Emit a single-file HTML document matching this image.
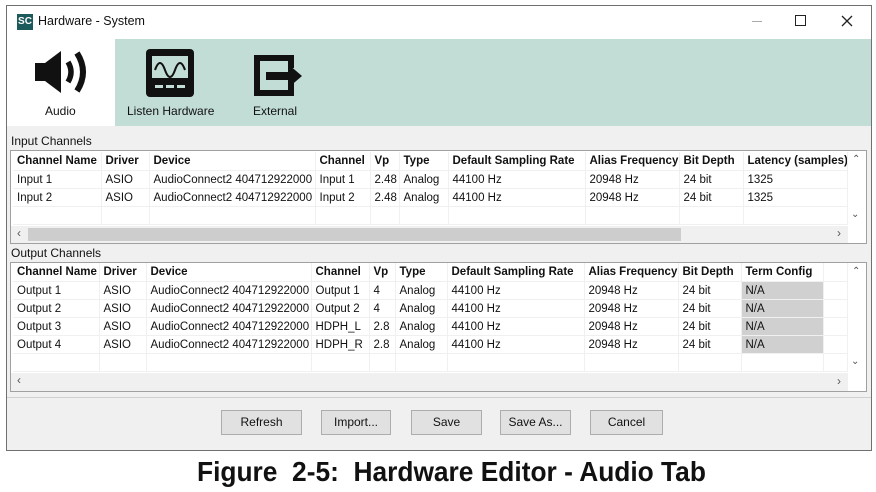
<!DOCTYPE html><html><head><style>
*{margin:0;padding:0;box-sizing:border-box}
body{width:876px;height:492px;background:#fff;position:relative;font-family:"Liberation Sans",sans-serif;font-size:11.5px;color:#111;overflow:hidden}
.a{position:absolute}
.win{left:6px;top:5px;width:866px;height:446px;border:1px solid #707070;background:#f0f0f0}
table{border-collapse:collapse;table-layout:fixed;position:absolute;background:#fff}
td{height:18px;padding:1px 0 0 4px;white-space:nowrap;overflow:hidden;border-right:1px solid #f0f0f0;border-bottom:1px solid #f0f0f0}
th{height:18px;padding:1px 0 0 4px;text-align:left;font-weight:bold;white-space:nowrap;overflow:hidden;border-right:1px solid #f0f0f0;border-bottom:1px solid #f0f0f0}
.box{border:1px solid #a0a0a0;background:#fff}
.btn{position:absolute;top:410px;height:25px;border:1px solid #adadad;background:#e1e1e1;text-align:center;line-height:23px;font-size:12px}
.na{background:#d0d0d0}
</style></head><body>
<div class="a win"></div>
<div class="a" style="left:7px;top:6px;width:864px;height:33px;background:#fff"></div>
<div class="a" style="left:17px;top:14px;width:16px;height:16px;background:#1d5a5c;color:#fff;font-size:10px;font-weight:bold;line-height:16px;text-align:center">SC</div>
<div class="a" style="left:38px;top:14px;font-size:12.5px">Hardware - System</div>
<div class="a" style="left:752px;top:21px;width:10px;height:1px;background:#aaa"></div>
<div class="a" style="left:795px;top:15px;width:11px;height:11px;border:1px solid #222"></div>
<svg class="a" style="left:841px;top:15px" width="12" height="12"><path d="M1 1L11 11M11 1L1 11" stroke="#222" stroke-width="1.3"/></svg>
<div class="a" style="left:7px;top:39px;width:108px;height:87px;background:#fff"></div>
<div class="a" style="left:115px;top:39px;width:756px;height:87px;background:#c2ddd6"></div>
<svg class="a" style="left:34px;top:50px" width="56" height="44" viewBox="0 0 56 44">
<path d="M1 13h10l16-12v42l-16-12h-10z" fill="#111"/>
<path d="M34 12q6 10 0 20" stroke="#111" stroke-width="5.5" fill="none"/>
<path d="M43 3q12 19 0 38" stroke="#111" stroke-width="6" fill="none"/></svg>
<div class="a" style="left:45px;top:104px;font-size:12px">Audio</div>
<svg class="a" style="left:145px;top:48px" width="50" height="50" viewBox="0 0 50 50">
<rect x="1" y="1" width="48" height="48" rx="4" fill="#111"/>
<rect x="7" y="8" width="36" height="22" fill="#c2ddd6"/>
<path d="M10 22q5-14 10 0t10 0 10 0" stroke="#111" stroke-width="2" fill="none"/>
<rect x="10" y="37" width="8" height="3" fill="#c2ddd6"/><rect x="21" y="37" width="8" height="3" fill="#c2ddd6"/><rect x="32" y="37" width="8" height="3" fill="#c2ddd6"/></svg>
<div class="a" style="left:127px;top:104px;font-size:12px">Listen Hardware</div>
<svg class="a" style="left:252px;top:53px" width="52" height="45" viewBox="0 0 52 45">
<path d="M2 2h40v13h-6v-7h-28v29h28v-7h6v13h-40z" fill="#111"/>
<path d="M14 19h22v-8l14 12-14 12v-8h-22z" fill="#111"/></svg>
<div class="a" style="left:253px;top:104px;font-size:12px">External</div>

<div class="a" style="left:11px;top:134px;font-size:12px">Input Channels</div>
<div class="a box" style="left:10px;top:150px;width:857px;height:94px"></div>
<table style="left:13px;top:152px;width:834px">
<colgroup><col style="width:88px"><col style="width:48px"><col style="width:166px"><col style="width:55px"><col style="width:29px"><col style="width:49px"><col style="width:137px"><col style="width:94px"><col style="width:64px"><col style="width:104px"></colgroup>
<tr><th>Channel Name</th><th>Driver</th><th>Device</th><th>Channel</th><th>Vp</th><th>Type</th><th>Default Sampling Rate</th><th>Alias Frequency</th><th>Bit Depth</th><th>Latency (samples)</th></tr>
<tr><td>Input 1</td><td>ASIO</td><td>AudioConnect2 404712922000</td><td>Input 1</td><td>2.48</td><td>Analog</td><td>44100 Hz</td><td>20948 Hz</td><td>24 bit</td><td>1325</td></tr>
<tr><td>Input 2</td><td>ASIO</td><td>AudioConnect2 404712922000</td><td>Input 2</td><td>2.48</td><td>Analog</td><td>44100 Hz</td><td>20948 Hz</td><td>24 bit</td><td>1325</td></tr>
<tr><td></td><td></td><td></td><td></td><td></td><td></td><td></td><td></td><td></td><td></td></tr>
</table>
<div class="a" style="left:11px;top:226px;width:837px;height:17px;background:#f0f0f0"></div>
<div class="a" style="left:28px;top:228px;width:653px;height:13px;background:#cdcdcd"></div>
<div class="a" style="left:17px;top:226px;font-size:12px;color:#555">‹</div>
<div class="a" style="left:837px;top:226px;font-size:12px;color:#555">›</div>
<div class="a" style="left:848px;top:151px;width:18px;height:75px;background:#fff"></div>
<div class="a" style="left:852px;top:154px;font-size:10px;color:#555">&#8963;</div>
<div class="a" style="left:851px;top:209px;font-size:10px;color:#555">&#8964;</div>

<div class="a" style="left:11px;top:246px;font-size:12px">Output Channels</div>
<div class="a box" style="left:10px;top:262px;width:857px;height:130px"></div>
<table style="left:13px;top:263px;width:834px">
<colgroup><col style="width:86px"><col style="width:47px"><col style="width:165px"><col style="width:58px"><col style="width:26px"><col style="width:52px"><col style="width:137px"><col style="width:94px"><col style="width:63px"><col style="width:82px"><col style="width:24px"></colgroup>
<tr><th>Channel Name</th><th>Driver</th><th>Device</th><th>Channel</th><th>Vp</th><th>Type</th><th>Default Sampling Rate</th><th>Alias Frequency</th><th>Bit Depth</th><th>Term Config</th><th></th></tr>
<tr><td>Output 1</td><td>ASIO</td><td>AudioConnect2 404712922000</td><td>Output 1</td><td>4</td><td>Analog</td><td>44100 Hz</td><td>20948 Hz</td><td>24 bit</td><td class="na">N/A</td><td></td></tr>
<tr><td>Output 2</td><td>ASIO</td><td>AudioConnect2 404712922000</td><td>Output 2</td><td>4</td><td>Analog</td><td>44100 Hz</td><td>20948 Hz</td><td>24 bit</td><td class="na">N/A</td><td></td></tr>
<tr><td>Output 3</td><td>ASIO</td><td>AudioConnect2 404712922000</td><td>HDPH_L</td><td>2.8</td><td>Analog</td><td>44100 Hz</td><td>20948 Hz</td><td>24 bit</td><td class="na">N/A</td><td></td></tr>
<tr><td>Output 4</td><td>ASIO</td><td>AudioConnect2 404712922000</td><td>HDPH_R</td><td>2.8</td><td>Analog</td><td>44100 Hz</td><td>20948 Hz</td><td>24 bit</td><td class="na">N/A</td><td></td></tr>
<tr><td></td><td></td><td></td><td></td><td></td><td></td><td></td><td></td><td></td><td></td><td></td></tr>
</table>
<div class="a" style="left:11px;top:373px;width:837px;height:18px;background:#f0f0f0"></div>
<div class="a" style="left:17px;top:373px;font-size:12px;color:#555">‹</div>
<div class="a" style="left:837px;top:374px;font-size:12px;color:#555">›</div>
<div class="a" style="left:848px;top:263px;width:18px;height:110px;background:#fff"></div>
<div class="a" style="left:852px;top:266px;font-size:10px;color:#555">&#8963;</div>
<div class="a" style="left:851px;top:356px;font-size:10px;color:#555">&#8964;</div>
<div class="a" style="left:7px;top:397px;width:864px;height:1px;background:#d0d0d0"></div>

<div class="btn" style="left:221px;width:81px">Refresh</div>
<div class="btn" style="left:321px;width:70px">Import...</div>
<div class="btn" style="left:411px;width:71px">Save</div>
<div class="btn" style="left:500px;width:71px">Save As...</div>
<div class="btn" style="left:590px;width:73px">Cancel</div>

<div class="a" style="left:197px;top:456px;width:700px;font-size:28px;font-weight:bold;transform:scaleX(0.94);transform-origin:left top;white-space:nowrap">Figure&nbsp; 2-5:&nbsp; Hardware Editor - Audio Tab</div>
</body></html>
